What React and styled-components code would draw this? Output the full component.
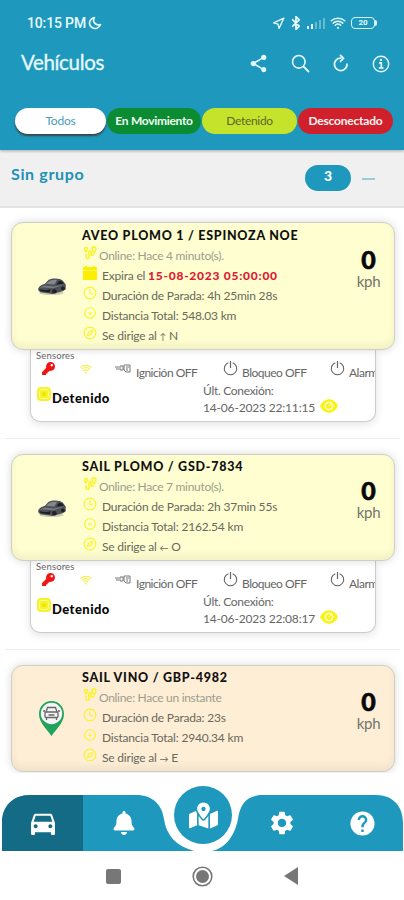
import React, { useState } from "react";
import styled, { createGlobalStyle } from "styled-components";
import {
  FiBluetooth,
  FiClock,
  FiCompass,
  FiNavigation,
} from "react-icons/fi";
import { FaBell, FaKey, FaMapMarkedAlt } from "react-icons/fa";
import { IoWifi } from "react-icons/io5";
import {
  MdDirectionsCar,
  MdHelp,
  MdOutlineArrowDropDownCircle,
  MdSettings,
  MdShare,
} from "react-icons/md";

const GlobalStyle = createGlobalStyle`
  * {
    box-sizing: border-box;
  }

  body {
    margin: 0;
    background: #fff;
    font-family: "Lato", "Open Sans", sans-serif;
    color: #666;
  }

  svg {
    display: block;
    flex-shrink: 0;
  }
`;

const Screen = styled.div`
  width: 404px;
  height: 900px;
  display: flex;
  flex-direction: column;
  overflow: hidden;
  background: #fff;
`;

const Header = styled.header`
  height: 150px;
  flex-shrink: 0;
  background: #1e98bc;
  color: #e6faff;
  box-shadow: 0 1px 3px rgba(0, 0, 0, 0.3);
  z-index: 1;
`;

const StatusBar = styled.div`
  height: 42px;
  padding: 4px 27px 0 27px;
  display: flex;
  align-items: center;
  justify-content: space-between;
`;

const Clock = styled.div`
  display: flex;
  align-items: center;
  gap: 2px;
  font-family: "Roboto", sans-serif;
  font-size: 14px;
  font-weight: 500;
  letter-spacing: -0.15px;
`;

const StatusIcons = styled.div`
  display: flex;
  align-items: center;
  gap: 4px;
`;

const Signal = styled.div`
  display: flex;
  align-items: flex-end;
  gap: 2px;
  height: 12px;
`;

const SignalBar = styled.i`
  width: 2px;
  height: ${({ $h }) => $h}px;
  background: #e6faff;
  opacity: ${({ $on }) => ($on ? 1 : 0.35)};
`;

const Battery = styled.div`
  width: 24px;
  height: 12px;
  border: 1.5px solid #d9f2f8;
  border-radius: 4px;
  font: 700 8px/9px "Roboto", sans-serif;
  text-align: center;
`;

const BatteryBox = styled.div`
  display: flex;
  align-items: center;

  &::after {
    content: "";
    width: 2px;
    height: 6px;
    background: #d9f2f8;
    border-radius: 0 2px 2px 0;
  }
`;

const TitleBar = styled.div`
  height: 44px;
  padding: 0 14px 0 21px;
  display: flex;
  align-items: center;
  justify-content: space-between;
`;

const Title = styled.h1`
  margin: 0 0 4px;
  font-size: 20.5px;
  font-weight: 400;
  letter-spacing: -0.35px;
  -webkit-text-stroke: 0.3px #e6faff;
`;

const Actions = styled.div`
  display: flex;
  align-items: center;
  gap: 22px;
  margin-bottom: 1px;
`;

const Tabs = styled.nav`
  display: grid;
  grid-template-columns: 91px 94px 95px 95px;
  column-gap: 1px;
  padding: 22px 10px 0 15px;
`;

const Tab = styled.button`
  height: 26px;
  padding: 0 0 2px;
  border: 0;
  border-radius: 13px;
  background: ${({ $bg }) => $bg};
  color: ${({ $fg }) => $fg};
  font-family: inherit;
  font-size: 12px;
  font-weight: ${({ $bold }) => ($bold ? 700 : 400)};
  letter-spacing: ${({ $track }) => $track || 0}px;
  white-space: nowrap;
  box-shadow: ${({ $active }) =>
    $active ? "0 2px 2px rgba(60, 60, 60, 0.9)" : "none"};
`;

const GroupBar = styled.div`
  height: 58px;
  flex-shrink: 0;
  padding: 0 29px 0 11px;
  display: flex;
  align-items: center;
  background: #f0f0f0;
  border-bottom: 2px solid #e4e4e4;
`;

const GroupName = styled.h2`
  flex: 1;
  margin: 0 0 10px;
  color: #2191b4;
  font-size: 16px;
  font-weight: 700;
  letter-spacing: 0.65px;
`;

const Count = styled.span`
  width: 46px;
  height: 26px;
  margin-right: 11px;
  border-radius: 13px;
  background: #1e98bc;
  color: #fff;
  font-size: 14px;
  font-weight: 900;
  line-height: 22px;
  text-align: center;
`;

const Collapse = styled.span`
  width: 13px;
  height: 2px;
  margin-top: 2px;
  background: #9acbdc;
`;

const List = styled.main`
  flex: 1;
  min-height: 0;
  overflow: hidden;
`;

const Item = styled.section`
  margin: 0 5px;
  padding: 14px 4px 16px 6px;
  border-bottom: 1px solid #ededed;

  & + & {
    padding-top: 15px;
  }
`;

const Card = styled.article`
  position: relative;
  display: grid;
  grid-template-columns: 70px 1fr 51px;
  height: ${({ $h }) => $h}px;
  border: 1px solid #cfcfc6;
  border-radius: 12px;
  background: ${({ $bg }) => $bg};
  box-shadow: 0 0 9px rgba(0, 0, 0, 0.15), inset 0 -5px 7px rgba(0, 0, 0, 0.05);
`;

const Thumb = styled.div`
  display: flex;
  align-items: center;
  justify-content: center;
  padding-left: 9px;
`;

const Details = styled.div`
  padding-top: ${({ $tight }) => ($tight ? 2 : 3)}px;
`;

const Name = styled.h3`
  height: 19px;
  margin: 0;
  color: #111;
  font-size: 12.5px;
  font-weight: 900;
  line-height: 19px;
  letter-spacing: 0.74px;
  white-space: nowrap;
`;

const Line = styled.div`
  height: 20px;
  padding-left: 1px;
  display: flex;
  align-items: center;
  gap: ${({ $online }) => ($online ? 2 : 5)}px;
  color: ${({ $online }) => ($online ? "#9d9d8e" : "#69695c")};
  font-size: 12px;
  letter-spacing: ${({ $online }) => ($online ? -0.3 : -0.2)}px;
  white-space: nowrap;

  svg {
    width: 14px;
    height: 14px;
    margin-top: -5px;
    color: #f8f42a;
  }
`;

const Arrow = styled.span`
  font-size: 9px;
`;

const Expires = styled.b`
  color: #dc1b34;
  font-weight: 900;
  letter-spacing: 0.75px;
`;

const Speed = styled.div`
  padding-top: ${({ $tight }) => ($tight ? 22 : 23)}px;
  color: #080808;
  font-size: 25px;
  font-weight: 900;
  line-height: 26px;
  text-align: center;
  -webkit-text-stroke: 0.6px #080808;
`;

const Unit = styled.div`
  color: #74746a;
  font-size: 15px;
  font-weight: 400;
  line-height: 19px;
  letter-spacing: -0.3px;
  -webkit-text-stroke: 0;
`;

const Panel = styled.div`
  height: 72px;
  margin: 0 19px;
  padding: 1px 0 0 5px;
  overflow: hidden;
  border: 1px solid #ccc;
  border-top: 0;
  border-radius: 0 0 10px 10px;
  background: #fff;
  box-shadow: 0 2px 9px rgba(0, 0, 0, 0.12);
`;

const SensorLabel = styled.div`
  height: 10px;
  font-size: 9.5px;
  line-height: 10px;
  letter-spacing: 0.15px;
`;

const Sensors = styled.div`
  display: grid;
  grid-template-columns: 37px 36px 108px 107px 60px;
  align-items: center;
  height: 18px;
  padding-left: 6px;
  font-size: 12px;
`;

const Sensor = styled.span`
  display: flex;
  align-items: center;
  gap: 4px;
  white-space: nowrap;
  letter-spacing: -0.5px;

  span {
    padding-top: 4px;
  }

  svg {
    margin-top: -4px;
  }
`;

const Bottom = styled.div`
  display: grid;
  grid-template-columns: 167px 1fr;
  height: 36px;
`;

const State = styled.div`
  display: flex;
  align-items: center;
  gap: 1px;
  padding-left: 1px;
  color: #080808;
  font-size: 13px;
  font-weight: 900;
  letter-spacing: 0.45px;

  svg {
    margin-top: -7px;
  }
`;

const Connection = styled.div`
  padding-top: 3px;
  font-size: 12px;
  line-height: 17px;
  letter-spacing: -0.3px;
`;

const Stamp = styled.div`
  display: flex;
  align-items: center;
  gap: 5px;
  letter-spacing: -0.18px;

  svg {
    margin-top: -3px;
  }
`;

const Footer = styled.footer`
  position: relative;
  display: flex;
  justify-content: space-between;
  height: 56px;
  flex-shrink: 0;
  margin-top: 22px;
  padding: 0 1px 0 2px;
`;

const Wing = styled.div`
  display: flex;
  width: 192px;
  color: #fff;
  background: #1e98bc;
  clip-path: path("${({ $shape }) => $shape}");
`;

const NavItem = styled.button`
  display: flex;
  align-items: center;
  justify-content: center;
  width: 81px;
  padding: 0;
  border: 0;
  color: #fff;
  background: ${({ $active }) => ($active ? "#136b85" : "transparent")};
  margin-left: ${({ $ml }) => $ml || 0}px;
`;

const MapButton = styled.button`
  position: absolute;
  left: 174px;
  top: -9px;
  width: 58px;
  height: 58px;
  display: flex;
  align-items: center;
  justify-content: center;
  padding: 0;
  border: 0;
  border-radius: 50%;
  color: #fff;
  background: #1e98bc;
`;

const SystemNav = styled.div`
  display: flex;
  align-items: center;
  justify-content: space-between;
  height: 49px;
  flex-shrink: 0;
  padding: 1px 106px 0 106px;
`;

const LEFT_WING =
  "M0 56V28C0 11 11 0 28 0H134C151 0 160 10 162 24C164 40 174 51 192 56Z";
const RIGHT_WING =
  "M192 56V28C192 11 182 0 165 0H52C36 0 29 9 27 24C24 40 15 53 1 56Z";

const MoonIcon = () => (
  <svg width="14" height="14" viewBox="0 0 14 14">
    <path
      d="M6.500 1.500C4 5 7 10 12.500 8.500 11 12.500 7 13.500 4 11.500 0 9 1 3 6.500 1.500Z"
      fill="none"
      stroke="currentColor"
      strokeWidth="1.700"
      strokeLinejoin="round"
    />
  </svg>
);

const SearchIcon = () => (
  <svg width="19" height="19" viewBox="0 0 19 19" fill="none" stroke="currentColor">
    <circle cx="7.800" cy="7.800" r="6.300" strokeWidth="1.600" />
    <path d="M12.500 12.500L18 18" strokeWidth="1.800" />
  </svg>
);

const ReloadIcon = () => (
  <svg width="18" height="19" viewBox="0 0 18 19" fill="none" stroke="currentColor">
    <path d="M4.300 5.800A6.300 6.300 0 1 0 15 9.500" strokeWidth="1.700" />
    <path d="M4.300 5.800C5.600 4.500 7.300 3.900 9.500 4.200" strokeWidth="1.700" />
    <path d="M8 .8L11.500 4.300 8 7.800" strokeWidth="1.700" />
  </svg>
);

const InfoIcon = () => (
  <svg width="18" height="18" viewBox="0 0 18 18" fill="none" stroke="currentColor">
    <circle cx="9" cy="9" r="7.700" strokeWidth="1.400" />
    <path d="M7 7.800h2.300v5M6.800 13h4.800" strokeWidth="1.700" />
    <circle cx="9" cy="4.900" r="1.200" fill="currentColor" stroke="none" />
  </svg>
);

const PowerIcon = () => (
  <svg width="15" height="15" viewBox="0 0 15 15" fill="none" stroke="#666">
    <path d="M5.300 1.700A6.200 6.200 0 1 0 9.700 1.700" strokeWidth="1.100" />
    <path d="M7.500 0v7" strokeWidth="1.200" />
  </svg>
);

const CarPhoto = () => (
  <svg width="30" height="18" viewBox="0 0 31 19">
    <ellipse cx="15" cy="17" rx="13" ry="2" fill="#777" opacity=".35" />
    <path
      d="M1 12C2 9 5 8 8 7L12 3C16 1 24 1 27 4L30 8V13L27 15L16 18L3 16L1 14Z"
      fill="#4d5157"
    />
    <path d="M9 7L13 4C16 3 19 3 21 3L18 8Z" fill="#83888c" />
    <path d="M20 8L23 4C25 4 27 5 28 7Z" fill="#1d2024" />
    <path d="M2 11L8 9L17 10L29 8L17 12L6 11Z" fill="#777b80" />
    <path d="M2 13L9 14L14 13L13 16L4 15Z" fill="#1a1c20" />
    <circle cx="18" cy="15" r="2.400" fill="#202226" />
    <circle cx="27" cy="12" r="2" fill="#202226" />
  </svg>
);

const CarPin = () => (
  <svg width="27" height="36" viewBox="0 0 27 36">
    <path
      d="M13.500 0C6 0 1 6 1 13c0 8 6 13 12.500 22C20 26 26 21 26 13 26 6 21 0 13.500 0Z"
      fill="#20a35d"
    />
    <circle cx="13.500" cy="12.500" r="10.700" fill="#f5f5f5" />
    <g fill="none" stroke="#666" strokeWidth="1.300">
      <path d="M8 11L9.500 6.500H17.500L19 11" />
      <rect x="7" y="11" width="13" height="5.500" rx="1" />
      <path d="M8.500 17v2M18.500 17v2M5 10h2M20 10h2M10.500 14h6" />
    </g>
  </svg>
);

const RouteIcon = () => (
  <svg viewBox="0 0 14 14" fill="none" stroke="currentColor">
    <path
      d="M1.500 3c0-2 3-2 3 0 0 1-1.500 3-1.500 3S1.500 4 1.500 3ZM9 3c0-3 4-3 4 0 0 1-2 4-2 4S9 4 9 3ZM3 8v3c0 2 3 2 3 0V6c0-2 2-2 2 0v3h3"
      strokeWidth="1.500"
    />
  </svg>
);

const CalendarIcon = () => (
  <svg viewBox="0 0 14 14">
    <rect y="1" width="14" height="13" rx="1" fill="#fbee00" />
    <path d="M0 4.500h14" stroke="#fff56b" />
    <path d="M3 0v2M11 0v2" stroke="#fbee00" strokeWidth="2" />
  </svg>
);

const EngineIcon = () => (
  <svg width="17" height="11" viewBox="0 0 17 11" fill="none" stroke="#777">
    <path d="M0 4h4M1 6h3M5 3h3v4H5zM9 2h6v7h-4L9 7zM11 4h3M12 5v3" />
  </svg>
);

const EyeIcon = () => (
  <svg width="18" height="14" viewBox="0 0 18 14">
    <path d="M0 7C4-2 14-2 18 7 14 16 4 16 0 7Z" fill="#f9f413" />
    <circle cx="9" cy="7" r="3.700" fill="none" stroke="#fff" strokeWidth="1.300" />
    <path d="M9 7l2-2" stroke="#fff" />
  </svg>
);

const StateIcon = () => (
  <svg width="14" height="14" viewBox="0 0 14 14">
    <rect width="14" height="14" rx="4" fill="#f6f326" />
    <rect x="2.500" y="2.500" width="9" height="9" rx="2" fill="none" stroke="#fffba0" />
    <circle cx="7" cy="7" r="2" fill="#eee500" />
  </svg>
);

const tabs = [
  { label: "Todos", bg: "#fff", fg: "#479dbb", track: -0.2 },
  { label: "En Movimiento", bg: "#0b8b32", fg: "#effff2", bold: true, track: -0.3 },
  { label: "Detenido", bg: "#c6e32b", fg: "#5b682c", track: -0.3 },
  { label: "Desconectado", bg: "#cf202b", fg: "#fff3f3", bold: true, track: -0.2 },
];

const vehicles = [
  {
    name: "AVEO PLOMO 1 / ESPINOZA NOE",
    online: "Hace 4 minuto(s).",
    expires: "15-08-2023 05:00:00",
    stop: "4h 25min 28s",
    distance: "548.03 km",
    arrow: "↑",
    heading: "N",
    last: "14-06-2023 22:11:15",
  },
  {
    name: "SAIL PLOMO / GSD-7834",
    online: "Hace 7 minuto(s).",
    stop: "2h 37min 55s",
    distance: "2162.54 km",
    arrow: "←",
    heading: "O",
    last: "14-06-2023 22:08:17",
  },
  {
    name: "SAIL VINO / GBP-4982",
    online: "Hace un instante",
    stop: "23s",
    distance: "2940.34 km",
    arrow: "→",
    heading: "E",
    pin: true,
  },
];

const SensorPanel = ({ last }) => (
  <Panel>
    <SensorLabel>Sensores</SensorLabel>
    <Sensors>
      <Sensor>
        <FaKey size={13} color="#ef1515" />
      </Sensor>
      <Sensor>
        <IoWifi size={14} color="#f5f04c" />
      </Sensor>
      <Sensor>
        <EngineIcon />
        <span>Ignición OFF</span>
      </Sensor>
      <Sensor>
        <PowerIcon />
        <span>Bloqueo OFF</span>
      </Sensor>
      <Sensor>
        <PowerIcon />
        <span>Alarm</span>
      </Sensor>
    </Sensors>
    <Bottom>
      <State>
        <StateIcon />
        Detenido
      </State>
      <Connection>
        Últ. Conexión:
        <Stamp>
          {last}
          <EyeIcon />
        </Stamp>
      </Connection>
    </Bottom>
  </Panel>
);

const Vehicle = ({ data }) => (
  <Item>
    <Card $h={data.expires ? 128 : 107} $bg={data.pin ? "#feeed6" : "#fefed0"}>
      <Thumb>{data.pin ? <CarPin /> : <CarPhoto />}</Thumb>
      <Details $tight={!data.expires}>
        <Name>{data.name}</Name>
        <Line $online>
          <RouteIcon />
          Online: {data.online}
        </Line>
        {data.expires && (
          <Line>
            <CalendarIcon />
            <span>
              Expira el <Expires>{data.expires}</Expires>
            </span>
          </Line>
        )}
        <Line>
          <FiClock />
          Duración de Parada: {data.stop}
        </Line>
        <Line>
          <MdOutlineArrowDropDownCircle />
          Distancia Total: {data.distance}
        </Line>
        <Line>
          <FiCompass />
          <span>
            Se dirige al <Arrow>{data.arrow}</Arrow> {data.heading}
          </span>
        </Line>
      </Details>
      <Speed $tight={!data.expires}>
        0<Unit>kph</Unit>
      </Speed>
    </Card>
    {data.last && <SensorPanel last={data.last} />}
  </Item>
);

const App = () => {
  const [tab, setTab] = useState("Todos");

  return (
    <>
      <GlobalStyle />
      <Screen>
        <Header>
          <StatusBar>
            <Clock>
              10:15 PM
              <MoonIcon />
            </Clock>
            <StatusIcons>
              <FiNavigation size={13} strokeWidth={2.500} />
              <FiBluetooth size={14} strokeWidth={3} />
              <Signal>
                <SignalBar $h={3} $on />
                <SignalBar $h={5} $on />
                <SignalBar $h={7} />
                <SignalBar $h={9} />
                <SignalBar $h={11} />
              </Signal>
              <IoWifi size={18} />
              <BatteryBox>
                <Battery>20</Battery>
              </BatteryBox>
            </StatusIcons>
          </StatusBar>
          <TitleBar>
            <Title>Vehículos</Title>
            <Actions>
              <MdShare size={21} />
              <SearchIcon />
              <ReloadIcon />
              <InfoIcon />
            </Actions>
          </TitleBar>
          <Tabs>
            {tabs.map((t) => (
              <Tab
                key={t.label}
                $bg={t.bg}
                $fg={t.fg}
                $bold={t.bold}
                $track={t.track}
                $active={t.label === tab}
                onClick={() => setTab(t.label)}
              >
                {t.label}
              </Tab>
            ))}
          </Tabs>
        </Header>

        <GroupBar>
          <GroupName>Sin grupo</GroupName>
          <Count>3</Count>
          <Collapse />
        </GroupBar>

        <List>
          {vehicles.map((v) => (
            <Vehicle key={v.name} data={v} />
          ))}
        </List>

        <Footer>
          <Wing $shape={LEFT_WING}>
            <NavItem $active>
              <MdDirectionsCar size={32} />
            </NavItem>
            <NavItem>
              <FaBell size={24} />
            </NavItem>
          </Wing>
          <Wing $shape={RIGHT_WING}>
            <NavItem $ml={30}>
              <MdSettings size={28} />
            </NavItem>
            <NavItem>
              <MdHelp size={29} />
            </NavItem>
          </Wing>
          <MapButton>
            <FaMapMarkedAlt size={29} />
          </MapButton>
        </Footer>

        <SystemNav>
          <svg width="15" height="15" viewBox="0 0 15 15">
            <rect width="15" height="15" rx="2" fill="#777" />
          </svg>
          <svg width="21" height="21" viewBox="0 0 21 21">
            <circle cx="10.500" cy="10.500" r="9.300" fill="none" stroke="#777" strokeWidth="1.600" />
            <circle cx="10.500" cy="10.500" r="6.500" fill="#777" />
          </svg>
          <svg width="14" height="18" viewBox="0 0 14 18">
            <path d="M0 9L14 0V18Z" fill="#777" />
          </svg>
        </SystemNav>
      </Screen>
    </>
  );
};

export default App;
